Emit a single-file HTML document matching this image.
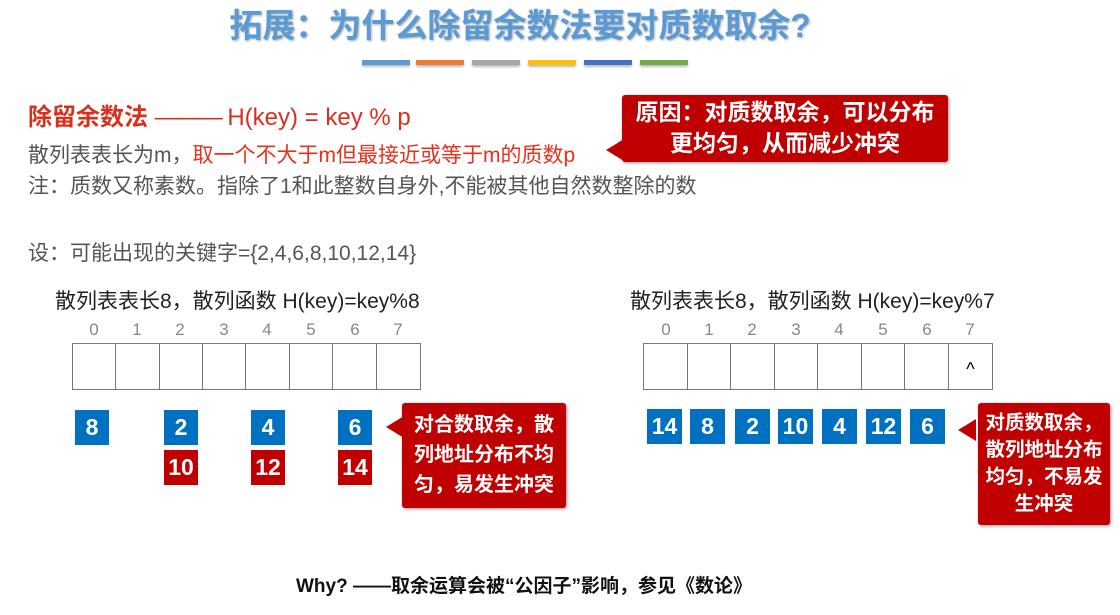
<!DOCTYPE html>
<html><head><meta charset="utf-8"><style>
*{margin:0;padding:0;box-sizing:border-box}
body{width:1120px;height:615px;background:#fff;position:relative;overflow:hidden;font-family:"Liberation Sans","Noto Sans CJK SC",sans-serif}
.a{position:absolute;white-space:nowrap}
.title{left:0;width:1040px;text-align:center;top:-1px;font-size:33px;font-weight:bold;color:#5b9bd5;text-shadow:1px 1px 2px #aaa}
.bar{position:absolute;top:60px;height:5px;width:48px;box-shadow:0 2px 2px #bbb}
.g{color:#555;font-size:21px}
.cell{position:absolute;border:1px solid #777;background:#fff}
.idx{position:absolute;font-size:17px;color:#888;width:20px;text-align:center}
.b{position:absolute;height:35px;color:#fff;font-weight:bold;font-size:23px;text-align:center;line-height:35px}
.bl{background:#0070c0}.rd{background:#c00000}
.call{position:absolute;background:#c00000;color:#fff;font-weight:bold;border-radius:3px;text-align:center;box-shadow:1px 1px 3px #999}
.tip{position:absolute;width:0;height:0;border-top:11px solid transparent;border-bottom:11px solid transparent;border-right:18px solid #c00000}
</style></head><body>
<div class="a title">拓展：为什么除留余数法要对质数取余?</div>
<div class="bar" style="left:362px;background:#5b9bd5"></div>
<div class="bar" style="left:416px;background:#ed7d31"></div>
<div class="bar" style="left:472px;background:#a5a5a5"></div>
<div class="bar" style="left:528px;background:#ffc000"></div>
<div class="bar" style="left:584px;background:#4472c4"></div>
<div class="bar" style="left:640px;background:#70ad47"></div>

<div class="a" style="left:28px;top:97px;font-size:24px;color:#d9301e"><b>除留余数法</b> <span style="letter-spacing:-2px">———</span> H(key) = key % p</div>
<div class="a g" style="left:28px;top:139px">散列表表长为m，<span style="color:#e8301e">取一个不大于m但最接近或等于m的质数p</span></div>
<div class="a g" style="left:28px;top:170px">注：质数又称素数。指除了1和此整数自身外,不能被其他自然数整除的数</div>
<div class="call" style="left:622px;top:95px;width:326px;height:67px;font-size:23px;line-height:31px;padding-top:2px">原因：对质数取余，可以分布<br>更均匀，从而减少冲突</div>
<div class="tip" style="left:606px;top:139px"></div>

<div class="a g" style="left:28px;top:237px">设：可能出现的关键字={2,4,6,8,10,12,14}</div>
<div class="a" style="left:55px;top:285px;font-size:21px;color:#222">散列表表长8，散列函数 H(key)=key%8</div>
<div class="a" style="left:630px;top:285px;font-size:21px;color:#222">散列表表长8，散列函数 H(key)=key%7</div>

<div class="idx" style="left:84px;top:320px">0</div><div class="idx" style="left:127px;top:320px">1</div><div class="idx" style="left:170px;top:320px">2</div><div class="idx" style="left:214px;top:320px">3</div><div class="idx" style="left:257px;top:320px">4</div><div class="idx" style="left:301px;top:320px">5</div><div class="idx" style="left:345px;top:320px">6</div><div class="idx" style="left:388px;top:320px">7</div>
<div class="cell" style="left:72px;top:343px;width:44px;height:47px"></div><div class="cell" style="left:115px;top:343px;width:45px;height:47px"></div><div class="cell" style="left:159px;top:343px;width:44px;height:47px"></div><div class="cell" style="left:202px;top:343px;width:44px;height:47px"></div><div class="cell" style="left:245px;top:343px;width:45px;height:47px"></div><div class="cell" style="left:289px;top:343px;width:44px;height:47px"></div><div class="cell" style="left:332px;top:343px;width:45px;height:47px"></div><div class="cell" style="left:376px;top:343px;width:45px;height:47px"></div>
<div class="b bl" style="left:75px;top:410px;width:34px">8</div>
<div class="b bl" style="left:164px;top:410px;width:34px">2</div>
<div class="b bl" style="left:251px;top:410px;width:34px">4</div>
<div class="b bl" style="left:338px;top:410px;width:34px">6</div>
<div class="b rd" style="left:164px;top:450px;width:34px">10</div>
<div class="b rd" style="left:251px;top:450px;width:34px">12</div>
<div class="b rd" style="left:338px;top:450px;width:34px">14</div>
<div class="call" style="left:402px;top:403px;width:164px;height:105px;font-size:20px;line-height:30px;padding-top:7px">对合数取余，散<br>列地址分布不均<br>匀，易发生冲突</div>
<div class="tip" style="left:386px;top:416px"></div>

<div class="idx" style="left:656px;top:320px">0</div><div class="idx" style="left:699px;top:320px">1</div><div class="idx" style="left:742px;top:320px">2</div><div class="idx" style="left:786px;top:320px">3</div><div class="idx" style="left:829px;top:320px">4</div><div class="idx" style="left:873px;top:320px">5</div><div class="idx" style="left:917px;top:320px">6</div><div class="idx" style="left:960px;top:320px">7</div>
<div class="cell" style="left:643px;top:343px;width:45px;height:47px"></div><div class="cell" style="left:687px;top:343px;width:44px;height:47px"></div><div class="cell" style="left:730px;top:343px;width:45px;height:47px"></div><div class="cell" style="left:774px;top:343px;width:44px;height:47px"></div><div class="cell" style="left:817px;top:343px;width:45px;height:47px"></div><div class="cell" style="left:861px;top:343px;width:44px;height:47px"></div><div class="cell" style="left:904px;top:343px;width:45px;height:47px"></div><div class="cell" style="left:948px;top:343px;width:45px;height:47px;text-align:center;font-size:18px;line-height:50px">^</div>
<div class="b bl" style="left:647px;top:409px;width:35px">14</div>
<div class="b bl" style="left:690px;top:409px;width:35px">8</div>
<div class="b bl" style="left:735px;top:409px;width:35px">2</div>
<div class="b bl" style="left:778px;top:409px;width:35px">10</div>
<div class="b bl" style="left:822px;top:409px;width:35px">4</div>
<div class="b bl" style="left:866px;top:409px;width:35px">12</div>
<div class="b bl" style="left:910px;top:409px;width:35px">6</div>
<div class="call" style="left:978px;top:403px;width:132px;height:122px;font-size:19.5px;line-height:27px;padding-top:7px">对质数取余，<br>散列地址分布<br>均匀，不易发<br>生冲突</div>
<div class="tip" style="left:958px;top:419px"></div>

<div class="a" style="left:0;width:1048px;text-align:center;top:571px;font-size:19px;font-weight:bold;color:#111">Why? ——取余运算会被“公因子”影响，参见《数论》</div>
</body></html>
